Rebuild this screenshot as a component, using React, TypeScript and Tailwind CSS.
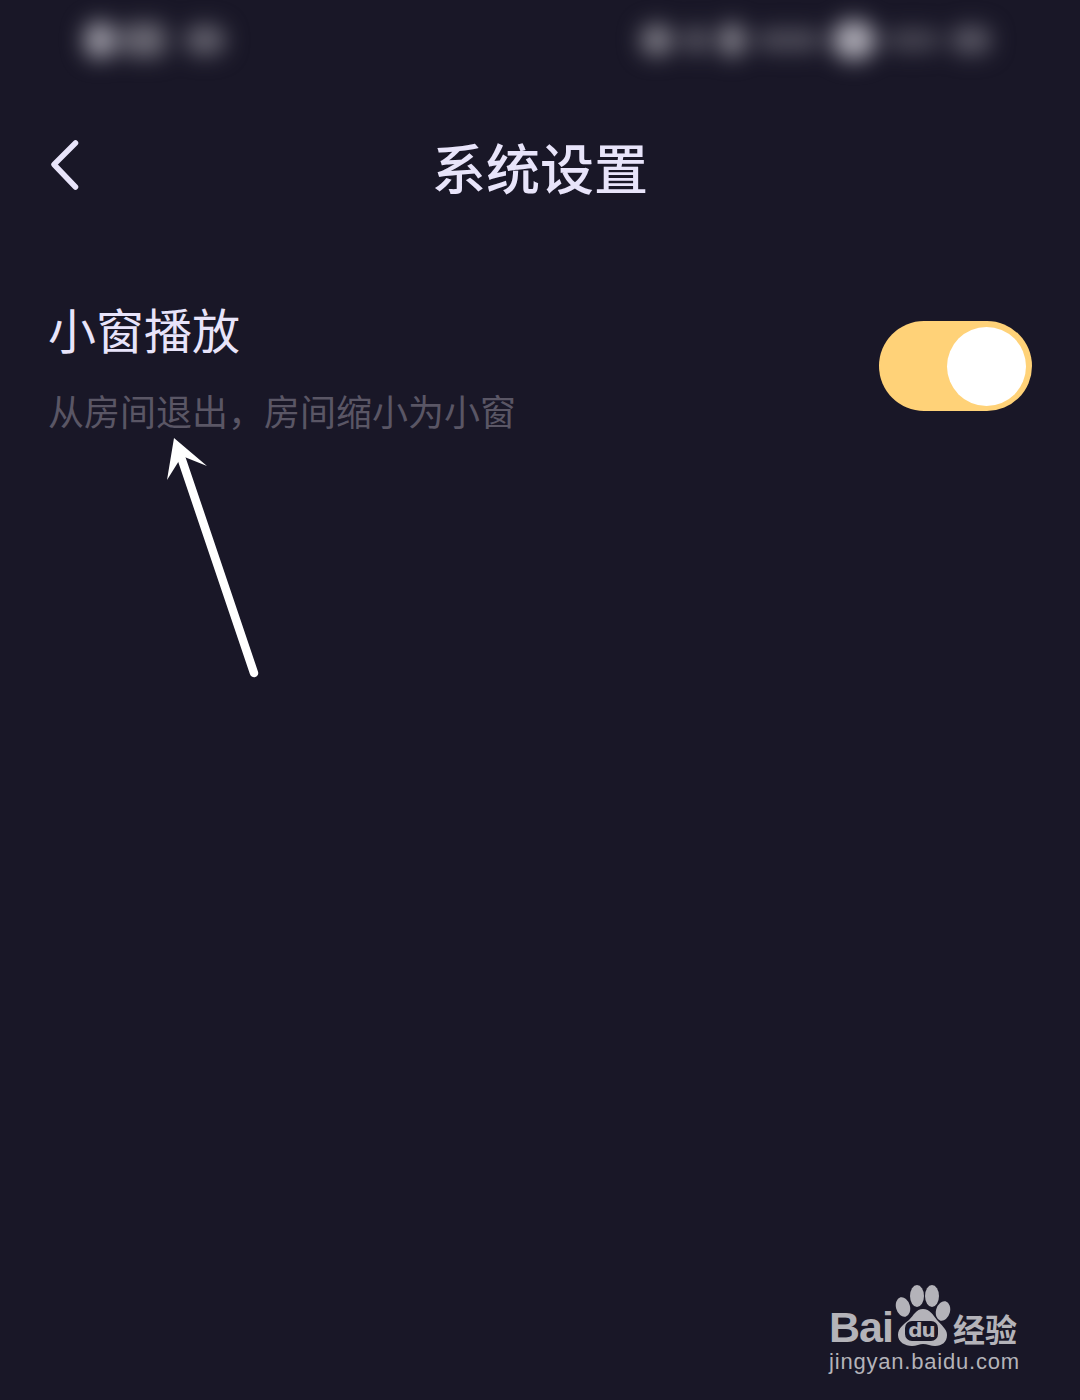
// System settings screen with a guide arrow and watermark on top
const cjk = "font-['Noto_Sans_CJK_SC','Noto_Sans',sans-serif]";

function StatusBlobs() {
  return (
    <div className="h-[80px] flex justify-between pl-[84px] pr-[88px] pt-[24px] blur-[11px]">
      <div className="flex items-center gap-[6px] h-[32px]">
        <div className="w-[32px] h-[38px] rounded-full bg-[#9a98a3]" />
        <div className="w-[44px] h-[34px] rounded-[8px] bg-[#6a6873]" />
        <div className="w-[6px]" />
        <div className="w-[42px] h-[30px] rounded-full bg-[#62606c]" />
      </div>
      <div className="flex items-center gap-[10px] h-[32px]">
        <div className="w-[34px] h-[32px] rounded-full bg-[#7c7a84]" />
        <div className="w-[24px] h-[28px] rounded-full bg-[#5d5b67]" />
        <div className="w-[28px] h-[34px] rounded-full bg-[#807e88]" />
        <div className="w-[66px] h-[22px] rounded-full bg-[#504e5b]" />
        <div className="w-[44px] h-[40px] rounded-full bg-[#aaa8b2]" />
        <div className="w-[54px] h-[22px] rounded-full bg-[#494754]" />
        <div className="w-[42px] h-[28px] rounded-full bg-[#585663]" />
      </div>
    </div>
  );
}

function Arrow() {
  return (
    <svg className="absolute left-0 top-0 pointer-events-none" width="1080" height="1400" viewBox="0 0 1080 1400">
      <path d="M181 457L254 673" stroke="#fff" strokeWidth="8.5" strokeLinecap="round" fill="none" />
      <path d="M174 438L207 466L182 456L167 480Z" fill="#fff" />
    </svg>
  );
}

function Watermark() {
  return (
    <div className="absolute left-[829px] top-[1284px] w-[195px] text-[#b4b3b9]">
      <div className="flex items-end h-[64px]">
        <span className="w-[66px] shrink-0 font-['Liberation_Sans',sans-serif] font-bold text-[43px] leading-[42px] tracking-[-1px]">Bai</span>
        <div className="relative w-[58px] h-[66px] shrink-0">
          <svg width="56" height="66" viewBox="0 0 56 66" className="absolute left-0 top-0">
            <ellipse cx="22" cy="14" rx="7" ry="11" fill="currentColor" />
            <ellipse cx="37" cy="14" rx="7" ry="11" fill="currentColor" />
            <ellipse cx="8" cy="25" rx="7" ry="10" transform="rotate(-15 8 25)" fill="currentColor" />
            <ellipse cx="48" cy="29" rx="7" ry="10" transform="rotate(15 48 29)" fill="currentColor" />
            <path d="M28 27C21 27 19 33 14 38C9 42 3 46 3 53C3 60 10 64 17 64C21 64 25 62 28 62C32 62 36 64 40 64C47 64 52 60 52 53C52 47 46 43 42 38C38 33 35 27 28 27Z" fill="currentColor" />
          </svg>
          <span className="absolute left-[10px] top-[39px] w-[33px] h-[20px] rounded-[7px] bg-[#191727] font-['DejaVu_Sans',sans-serif] font-bold text-[20px] leading-[19px] text-center tracking-[-1px]">du</span>
        </div>
        <span className={`${cjk} font-bold text-[32px] leading-[40px] whitespace-nowrap`}>经验</span>
      </div>
      <div className="font-['Liberation_Sans',sans-serif] text-[22px] leading-[26px] mt-[1px] whitespace-nowrap tracking-[0.8px]">jingyan.baidu.com</div>
    </div>
  );
}

export default function App() {
  return (
    <div className={`${cjk} relative w-[1080px] h-[1400px] bg-[#191727] overflow-hidden`}>
      <StatusBlobs />

      {/* Title bar */}
      <div className="relative h-[176px] flex items-start justify-center">
        <svg className="absolute left-[48px] top-[58px]" width="34" height="54" viewBox="0 0 34 54">
          <path d="M27.5 5L6 26.5L27.5 49" stroke="#e8e4fa" strokeWidth="5.5" strokeLinecap="round" strokeLinejoin="round" fill="none" />
        </svg>
        <h1 className="mt-[53px] text-[54px] leading-[68px] font-medium text-[#e8e4fa]">系统设置</h1>
      </div>

      {/* Small window row */}
      <div className="flex items-start justify-between pl-[48px] pr-[48px] pt-[39px]">
        <div>
          <div className="text-[48px] leading-[66px] font-normal text-[#e8e4fa]">小窗播放</div>
          <div className="mt-[25px] text-[36px] leading-[48px] text-[#5a5665]">从房间退出，房间缩小为小窗</div>
        </div>
        <div className="mt-[26px] w-[153px] h-[90px] rounded-full bg-[#ffd278] flex items-center justify-end pr-[6px]">
          <div className="w-[79px] h-[79px] rounded-full bg-white" />
        </div>
      </div>

      <Arrow />
      <Watermark />
    </div>
  );
}
